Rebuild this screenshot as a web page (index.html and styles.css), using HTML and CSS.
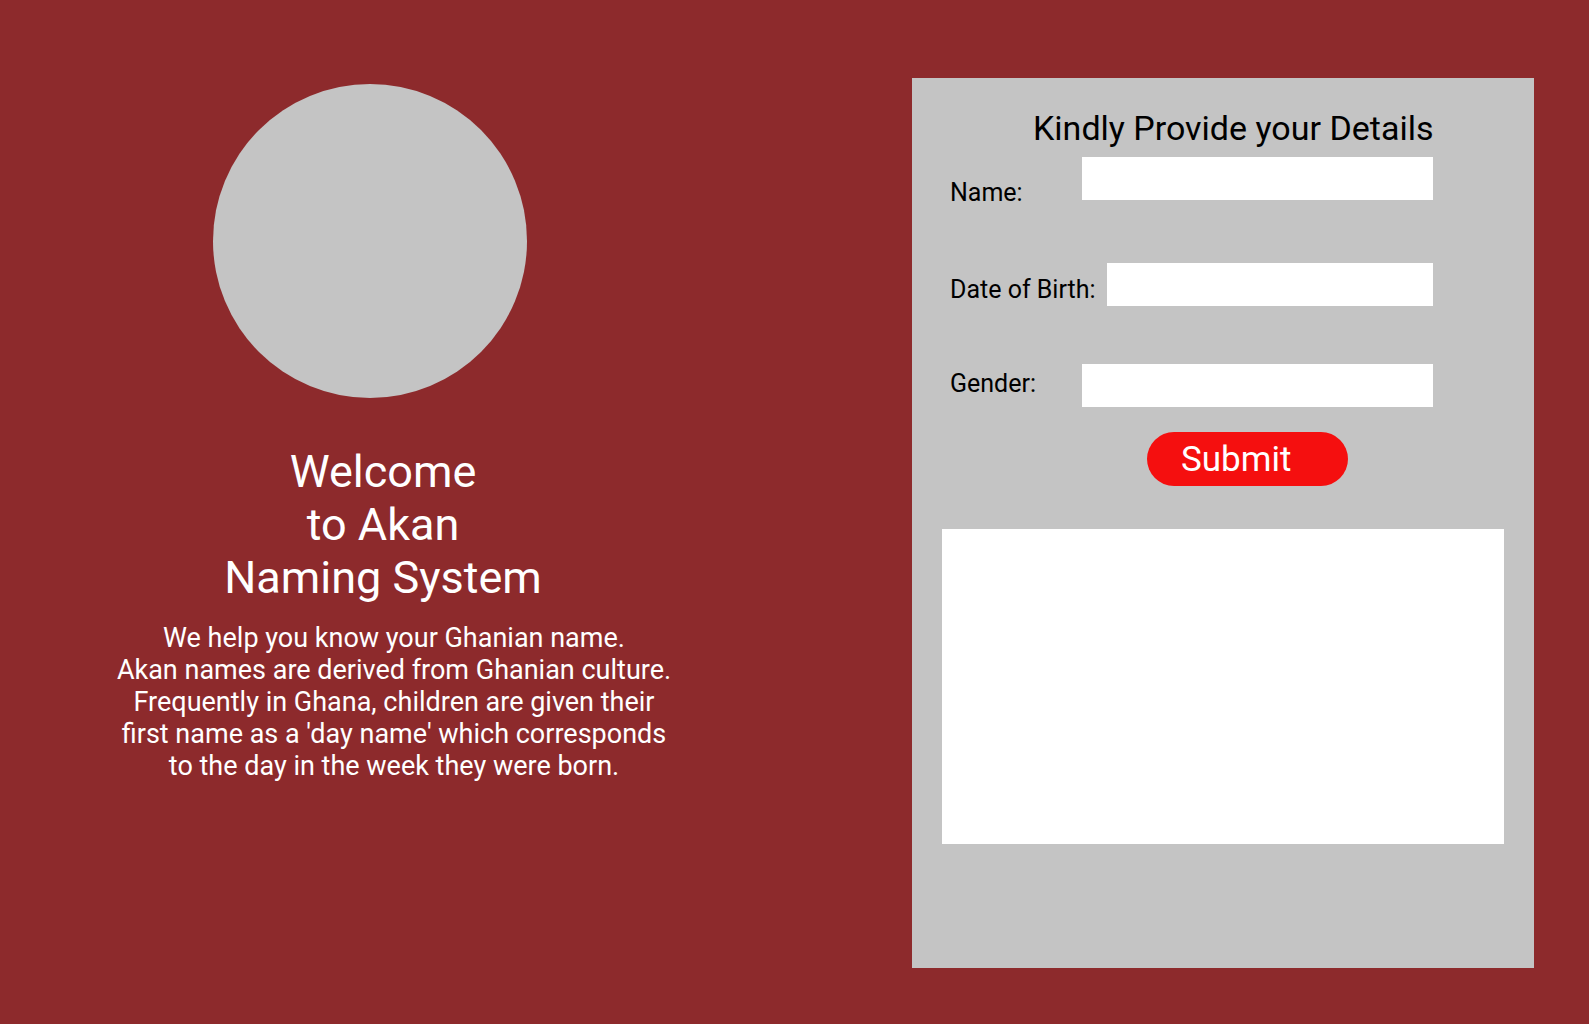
FILE: index.html
```html
<!DOCTYPE html>
<html lang="en">
<head>
<meta charset="utf-8">
<title>Akan Naming System</title>
<link rel="stylesheet" href="styles.css">
</head>
<body>
<main class="page">
  <section class="intro">
    <div class="avatar"></div>
    <h1 class="title">Welcome<br>to Akan<br>Naming System</h1>
    <p class="lead">We help you know your Ghanian name.<br>Akan names are derived from Ghanian culture.<br>Frequently in Ghana, children are given their<br>first name as a 'day name' which corresponds<br>to the day in the week they were born.</p>
  </section>
  <section class="panel">
    <h2 class="panel-title">Kindly Provide your Details</h2>
    <form class="form">
      <div class="row row-name">
        <label class="label" for="name">Name:</label>
        <input class="field" id="name" type="text">
      </div>
      <div class="row row-dob">
        <label class="label" for="dob">Date of Birth:</label>
        <input class="field" id="dob" type="text">
      </div>
      <div class="row row-gender">
        <label class="label" for="gender">Gender:</label>
        <input class="field" id="gender" type="text">
      </div>
      <div class="actions">
        <button class="submit" type="button">Submit</button>
      </div>
    </form>
    <div class="output"></div>
  </section>
</main>
</body>
</html>
```
FILE: styles.css
```css
html, body {
  margin: 0;
  padding: 0;
}
body {
  background: #8d2a2c;
  font-family: Roboto, "Liberation Sans", sans-serif;
  width: 1589px;
  height: 1024px;
  overflow: hidden;
}
.page {
  display: flex;
  align-items: flex-start;
}
.intro {
  width: 770px;
  padding-top: 84px;
  display: flex;
  flex-direction: column;
  align-items: center;
  color: #fff;
}
.avatar {
  width: 314px;
  height: 314px;
  border-radius: 50%;
  background: #c4c4c4;
  align-self: flex-start;
  margin-left: 213px;
}
.title {
  margin: 47px 0 0 0;
  font-size: 45px;
  line-height: 53px;
  font-weight: 400;
  text-align: center;
  transform: translateX(-2px);
}
.lead {
  margin: 18px 0 0 18px;
  font-size: 27px;
  line-height: 32px;
  font-weight: 400;
  text-align: center;
}
.panel {
  margin-left: 142px;
  margin-top: 78px;
  width: 622px;
  height: 890px;
  background: #c4c4c4;
  box-sizing: border-box;
  padding: 28px 30px 0 30px;
}
.panel-title {
  margin: 0 0 0 91px;
  font-size: 34px;
  line-height: 44px;
  font-weight: 400;
  color: #000;
  width: 420px;
  white-space: nowrap;
}
.form {
  padding-left: 8px;
  width: 483px;
}
.row {
  display: flex;
  align-items: flex-start;
  height: 43px;
}
.row-name { margin-top: 7px; }
.row-dob { margin-top: 63px; }
.row-gender { margin-top: 58px; }
.label {
  font-size: 25px;
  line-height: 30px;
  color: #000;
  min-width: 132px;
}
.row-name .label { margin-top: 21px; }
.row-dob .label {
  min-width: 0;
  margin-right: 11px;
  margin-top: 12px;
}
.row-gender .label { margin-top: 5px; }
.field {
  flex: 1;
  height: 43px;
  border: none;
  background: #fff;
  margin: 0;
  padding: 0;
  outline: none;
}
.actions {
  display: flex;
  justify-content: flex-start;
  margin-top: 25px;
}
.submit {
  margin-left: 197px;
  width: 201px;
  height: 54px;
  border: none;
  border-radius: 27px;
  background: #f50f0f;
  color: #fff;
  font-family: Roboto, "Liberation Sans", sans-serif;
  font-size: 35px;
  text-align: left;
  padding: 0 0 0 34px;
}
.output {
  margin-top: 43px;
  width: 562px;
  height: 315px;
  background: #fff;
}
```
